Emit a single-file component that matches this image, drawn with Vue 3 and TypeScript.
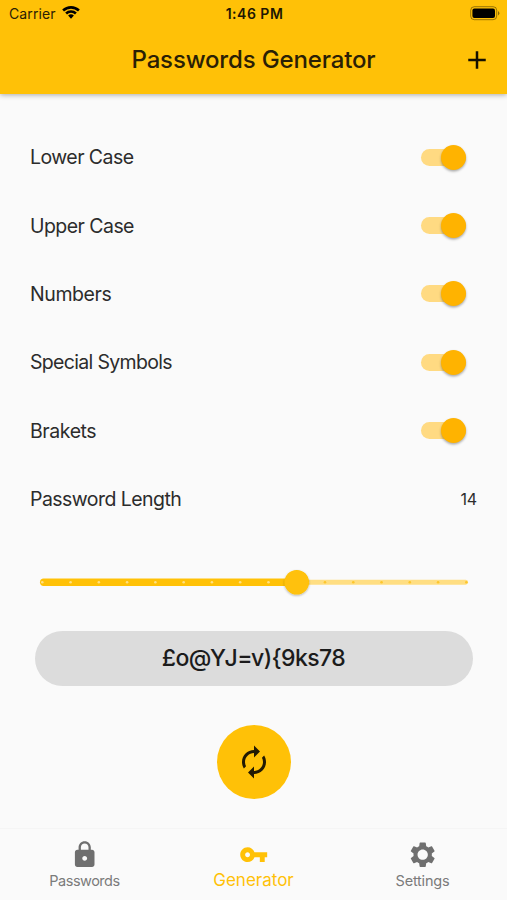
<script setup lang="ts">
import { ref } from 'vue'

interface Option {
  key: string
  label: string
  on: boolean
}

const options = ref<Option[]>([
  { key: 'lower', label: 'Lower Case', on: true },
  { key: 'upper', label: 'Upper Case', on: true },
  { key: 'numbers', label: 'Numbers', on: true },
  { key: 'symbols', label: 'Special Symbols', on: true },
  { key: 'brackets', label: 'Brakets', on: true },
])

const passwordLength = ref(14)
const password = ref('£o@YJ=v){9ks78')
const minLength = 5
const maxLength = 20
const tickStart = 2.3
const tickGap = 28.27
const ticks = Array.from({ length: maxLength - minLength + 1 }, (_, i) => ({
  x: tickStart + i * tickGap,
  value: minLength + i,
}))
const thumbX = tickStart + (passwordLength.value - minLength) * tickGap
</script>

<template>
  <div class="screen">
    <header class="top">
      <div class="status">
        <div class="carrier">
          <span>Carrier</span>
          <svg class="wifi" viewBox="0 0 18 14">
            <path d="M0.2 4.5a12.6 12.6 0 0 1 17.6 0L16 6.5a10 10 0 0 0-14 0z" />
            <path d="M3.2 7.6a8.3 8.3 0 0 1 11.6 0L13 9.5a5.7 5.7 0 0 0-8 0z" />
            <path d="M6.1 10.6a4.2 4.2 0 0 1 5.8 0L9 13.7z" />
          </svg>
        </div>
        <span class="clock">1:46 PM</span>
        <div class="power">
          <svg class="battery" viewBox="0 0 30 15">
            <rect x="0.7" y="0.7" width="26" height="13" rx="3.6" fill="none" stroke="#000" stroke-opacity=".4" stroke-width="1" />
            <rect x="2.4" y="2.4" width="22.6" height="9.6" rx="2" />
            <path d="M28 5a2.6 2.6 0 0 1 0 4.6z" opacity=".45" />
          </svg>
        </div>
      </div>
      <div class="appbar">
        <span></span>
        <h1>Passwords Generator</h1>
        <button class="add" aria-label="Add">
          <svg viewBox="0 0 24 24"><path d="M19 13h-6v6h-2v-6H5v-2h6V5h2v6h6v2z" /></svg>
        </button>
      </div>
    </header>

    <main>
      <div v-for="o in options" :key="o.key" class="row">
        <span :class="['label', o.key]">{{ o.label }}</span>
        <button class="switch" role="switch" :aria-checked="o.on" @click="o.on = !o.on">
          <i class="thumb"></i>
        </button>
      </div>
      <div class="row">
        <span class="label length">Password Length</span>
        <span class="value">{{ passwordLength }}</span>
      </div>

      <svg class="slider" viewBox="0 0 428 32">
        <defs>
          <filter id="knob" x="-30%" y="-30%" width="160%" height="160%">
            <feDropShadow dx="0" dy="1" stdDeviation="0.9" flood-opacity=".3" />
          </filter>
        </defs>
        <rect :x="thumbX" y="13.8" :width="428 - thumbX" height="4.9" rx="2.4" fill="#ffde82" />
        <rect x="0" y="12.5" :width="thumbX" height="7.4" rx="3.7" fill="#ffc107" />
        <circle
          v-for="t in ticks"
          :key="t.value"
          :cx="t.x"
          cy="16.2"
          r="1.3"
          :fill="t.value < passwordLength ? '#ffe083' : '#fdc62c'"
        />
        <circle :cx="thumbX" cy="16.2" r="12.3" fill="#ffc107" filter="url(#knob)" />
      </svg>

      <div class="password">{{ password }}</div>

      <button class="refresh" aria-label="Generate">
        <svg viewBox="0 0 24 24">
          <path d="M12 6v3l4-4-4-4v3c-4.42 0-8 3.58-8 8 0 1.57.46 3.03 1.24 4.26L6.7 14.8c-.45-.83-.7-1.79-.7-2.8 0-3.31 2.69-6 6-6zm6.76 1.74L17.3 9.2c.44.84.7 1.79.7 2.8 0 3.31-2.69 6-6 6v-3l-4 4 4 4v-3c4.42 0 8-3.58 8-8 0-1.57-.46-3.03-1.24-4.26z" />
        </svg>
      </button>
    </main>

    <nav>
      <a class="tab passwords">
        <svg viewBox="0 0 24 24">
          <path d="M18 8h-1V6c0-2.76-2.24-5-5-5S7 3.24 7 6v2H6c-1.1 0-2 .9-2 2v10c0 1.1.9 2 2 2h12c1.1 0 2-.9 2-2V10c0-1.1-.9-2-2-2zm-6 9c-1.1 0-2-.9-2-2s.9-2 2-2 2 .9 2 2-.9 2-2 2zm3.1-9H8.9V6c0-1.71 1.39-3.1 3.1-3.1s3.1 1.39 3.1 3.1v2z" />
        </svg>
        <span>Passwords</span>
      </a>
      <a class="tab active">
        <svg viewBox="0 0 24 24">
          <path d="M12.65 10C11.83 7.67 9.61 6 7 6c-3.31 0-6 2.69-6 6s2.69 6 6 6c2.61 0 4.83-1.67 5.65-4H17v4h4v-4h2v-4H12.65zM7 14c-1.1 0-2-.9-2-2s.9-2 2-2 2 .9 2 2-.9 2-2 2z" />
        </svg>
        <span>Generator</span>
      </a>
      <a class="tab settings">
        <svg viewBox="0 0 24 24">
          <path d="M19.43 12.98c.04-.32.07-.64.07-.98s-.03-.66-.07-.98l2.11-1.65c.19-.15.24-.42.12-.64l-2-3.46c-.12-.22-.39-.3-.61-.22l-2.49 1c-.52-.4-1.08-.73-1.69-.98l-.38-2.65C14.46 2.18 14.25 2 14 2h-4c-.25 0-.46.18-.49.42l-.38 2.65c-.61.25-1.17.59-1.69.98l-2.49-1c-.23-.09-.49 0-.61.22l-2 3.46c-.13.22-.07.49.12.64l2.11 1.65c-.04.32-.07.65-.07.98s.03.66.07.98l-2.11 1.65c-.19.15-.24.42-.12.64l2 3.46c.12.22.39.3.61.22l2.49-1c.52.4 1.08.73 1.69.98l.38 2.65c.03.24.24.42.49.42h4c.25 0 .46-.18.49-.42l.38-2.65c.61-.25 1.17-.59 1.69-.98l2.49 1c.23.09.49 0 .61-.22l2-3.46c.12-.22.07-.49-.12-.64l-2.11-1.65zM12 16.2c-2.32 0-4.2-1.88-4.2-4.2s1.88-4.2 4.2-4.2 4.2 1.88 4.2 4.2-1.88 4.2-4.2 4.2z" />
        </svg>
        <span>Settings</span>
      </a>
    </nav>
  </div>
</template>

<style>
body {
  margin: 0;
  background: #fafafa;
}
</style>

<style scoped>
.screen {
  width: 507px;
  height: 900px;
  display: flex;
  flex-direction: column;
  overflow: hidden;
  background: #fafafa;
  color: #2c2c2c;
  font-family: Inter, Roboto, sans-serif;
}
button {
  border: 0;
  padding: 0;
  background: none;
}
svg {
  display: block;
}
.top {
  flex: none;
  height: 94px;
  background: #ffc107;
  color: #2a2005;
  box-shadow: 0 1px 5px rgba(0, 0, 0, 0.32);
}
.status {
  height: 26px;
  display: grid;
  grid-template-columns: 1fr auto 1fr;
  align-items: center;
  padding: 1px 7px 0 9px;
  box-sizing: border-box;
  font-size: 14px;
}
.carrier {
  display: flex;
  align-items: center;
  gap: 6px;
  letter-spacing: 0.1px;
}
.wifi {
  width: 18px;
  height: 14px;
  fill: #000;
  margin-top: -3px;
}
.clock {
  font-weight: 600;
  font-size: 14px;
  letter-spacing: 0.5px;
  color: #1e1703;
}
.power {
  display: flex;
  justify-content: flex-end;
}
.battery {
  width: 30px;
  height: 15px;
}
.appbar {
  height: 67px;
  display: grid;
  grid-template-columns: 44px 1fr 44px;
  align-items: center;
}
h1 {
  margin: 0;
  text-align: center;
  font-size: 24px;
  line-height: 30px;
  font-weight: 500;
  letter-spacing: -0.15px;
}
.add {
  width: 30px;
  margin-left: -1px;
}
.add svg {
  width: 30px;
  height: 30px;
  fill: #161000;
}
main {
  flex: 1;
  display: flex;
  flex-direction: column;
  align-items: center;
  padding-top: 29px;
}
.row {
  width: 447px;
  height: 68.4px;
  display: flex;
  align-items: center;
  justify-content: space-between;
}
.label {
  font-size: 19.5px;
  letter-spacing: -0.55px;
}
.symbols {
  letter-spacing: -0.67px;
}
.numbers,
.brackets {
  letter-spacing: -0.42px;
}
.value {
  font-size: 16px;
  letter-spacing: -0.2px;
}
.switch {
  width: 45px;
  height: 17px;
  margin-right: 11px;
  display: flex;
  align-items: center;
  justify-content: flex-end;
  border-radius: 9px;
  background: #ffda82;
}
.thumb {
  width: 25px;
  height: 25px;
  border-radius: 50%;
  background: #ffb300;
  box-shadow: 0 1.5px 2.5px rgba(0, 0, 0, 0.32);
}
.slider {
  width: 428px;
  height: 32px;
  margin-top: 32.6px;
  overflow: visible;
}
.password {
  width: 438px;
  height: 55px;
  margin-top: 33px;
  border-radius: 28px;
  background: #dcdcdc;
  color: #1b1b1b;
  font-size: 23px;
  font-weight: 500;
  line-height: 55px;
  letter-spacing: -0.6px;
  text-align: center;
}
.refresh {
  width: 74px;
  height: 74px;
  margin-top: 39px;
  border-radius: 50%;
  background: #ffc107;
  display: flex;
  align-items: center;
  justify-content: center;
}
.refresh svg {
  width: 36px;
  height: 36px;
  fill: #221a03;
}
nav {
  height: 72px;
  box-sizing: border-box;
  border-top: 1px solid #f5f5f5;
  display: grid;
  grid-template-columns: repeat(3, 1fr);
}
.tab {
  display: flex;
  flex-direction: column;
  align-items: center;
  padding-top: 11px;
  color: #7b7b7b;
  font-size: 14.5px;
  line-height: 20px;
}
.tab svg {
  width: 29.4px;
  height: 29.4px;
  fill: #6f6f6f;
}
.tab span {
  margin-top: 2px;
}
.passwords span {
  letter-spacing: -0.5px;
}
.settings span {
  letter-spacing: -0.2px;
}
.tab.active {
  color: #ffc107;
  font-size: 17px;
}
.active svg {
  fill: #ffc107;
}
.active span {
  margin-top: 1px;
}
</style>
